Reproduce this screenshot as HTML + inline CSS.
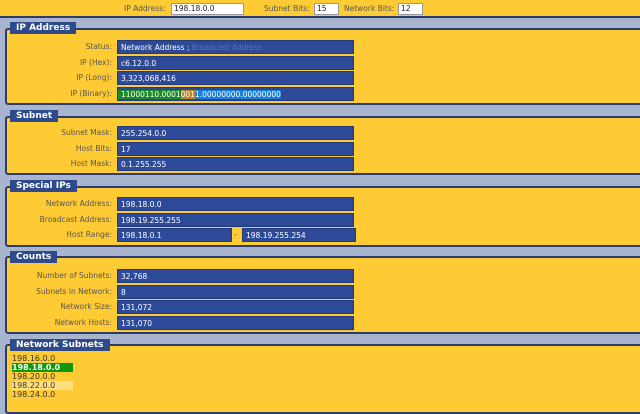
<!DOCTYPE html><html><head><style>
*{margin:0;padding:0;box-sizing:border-box}
body{width:640px;height:400px;overflow:hidden;background:#a9b5cf;font-family:"DejaVu Sans","Liberation Sans",sans-serif;font-size:7.5px;color:#333;position:relative}
.top{position:absolute;left:0;top:0;width:640px;height:18px;background:#ffcb35;border-bottom:2px solid #2d3d6b}
.top span{position:absolute;top:4px;color:#555}
.top i{position:absolute;top:3px;height:12px;background:#fff;border:1px solid #999;font-style:normal;padding-left:2px;line-height:10px;color:#222}
.box{position:absolute;left:5px;width:640px;background:#ffcb35;border:2px solid #2d3d6b;border-radius:3px}
.lg{position:absolute;left:10px;height:12px;background:#2d4a8c;color:#fff;font-weight:bold;font-size:9px;padding:0 6px;line-height:12px;font-family:"DejaVu Sans",sans-serif}
.l{position:absolute;width:107px;text-align:right;color:#555;line-height:14px;left:5px}
.v{position:absolute;left:117px;width:237px;height:14px;background:#2d4a99;color:#fff;line-height:14px;padding-left:3px;border:1px solid #223a7a}
.sub{position:absolute;left:12px;font-size:8px;line-height:9px;color:#333}
</style></head><body>
<div class="top">
<span style="left:124px">IP Address:</span><i style="left:171px;width:73px">198.18.0.0</i>
<span style="left:264px">Subnet Bits:</span><i style="left:314px;width:25px">15</i>
<span style="left:344px">Network Bits:</span><i style="left:398px;width:25px">12</i>
</div>
<div class="box" style="top:28px;height:77px"></div><div class="lg" style="top:22px">IP Address</div>
<div class="l" style="top:40px">Status:</div><div class="v" style="top:40px">Network Address ; <span style="color:#5a72b8">Broadcast Address</span></div>
<div class="l" style="top:56px">IP (Hex):</div><div class="v" style="top:56px">c6.12.0.0</div>
<div class="l" style="top:71px">IP (Long):</div><div class="v" style="top:71px">3,323,068,416</div>
<div class="l" style="top:87px">IP (Binary):</div><div class="v" style="top:87px;padding-left:0"><span style="background:#1a8a2a;padding-left:3px">11000110.0001</span><span style="background:#b8862a">001</span><span style="background:#1a7fd8">1.00000000.00000000</span></div>
<div class="box" style="top:116px;height:59px"></div><div class="lg" style="top:110px">Subnet</div>
<div class="l" style="top:126px">Subnet Mask:</div><div class="v" style="top:126px">255.254.0.0</div>
<div class="l" style="top:142px">Host Bits:</div><div class="v" style="top:142px">17</div>
<div class="l" style="top:157px">Host Mask:</div><div class="v" style="top:157px">0.1.255.255</div>
<div class="box" style="top:186px;height:61px"></div><div class="lg" style="top:180px">Special IPs</div>
<div class="l" style="top:197px">Network Address:</div><div class="v" style="top:197px">198.18.0.0</div>
<div class="l" style="top:213px">Broadcast Address:</div><div class="v" style="top:213px">198.19.255.255</div>
<div class="l" style="top:228px">Host Range:</div><div class="v" style="top:228px;width:115px">198.18.0.1</div>
<div style="position:absolute;left:234px;top:228px;line-height:14px;color:#555">-</div>
<div class="v" style="top:228px;left:242px;width:114px">198.19.255.254</div>
<div class="box" style="top:256px;height:78px"></div><div class="lg" style="top:251px">Counts</div>
<div class="l" style="top:269px">Number of Subnets:</div><div class="v" style="top:269px">32,768</div>
<div class="l" style="top:285px">Subnets in Network:</div><div class="v" style="top:285px">8</div>
<div class="l" style="top:300px">Network Size:</div><div class="v" style="top:300px">131,072</div>
<div class="l" style="top:316px">Network Hosts:</div><div class="v" style="top:316px">131,070</div>
<div class="box" style="top:344px;height:70px"></div><div class="lg" style="top:339px">Network Subnets</div>
<div class="sub" style="top:354px">198.16.0.0</div>
<div class="sub" style="top:363px;width:61px;background:#0a9a0a;color:#fff;font-weight:bold">198.18.0.0</div>
<div class="sub" style="top:372px">198.20.0.0</div>
<div class="sub" style="top:381px;width:61px;background:#ffde80">198.22.0.0</div>
<div class="sub" style="top:390px">198.24.0.0</div>
</body></html>
